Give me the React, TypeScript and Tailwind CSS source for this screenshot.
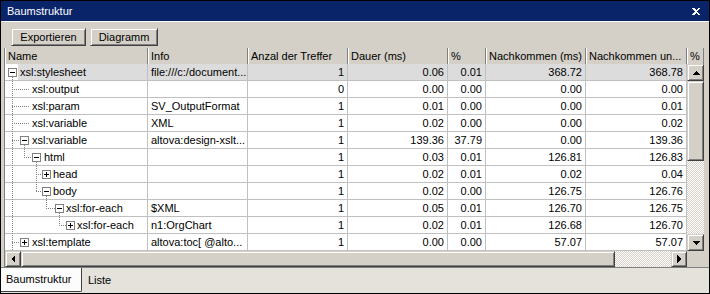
import React from 'react'

type Row = {
  name: string
  tx: number
  info: string
  hits: string
  dur: string
  pct: string
  nk: string
  nku: string
}

const rows: Row[] = [
  { name: 'xsl:stylesheet', tx: 15, info: 'file:///c:/document...', hits: '1', dur: '0.06', pct: '0.01', nk: '368.72', nku: '368.78' },
  { name: 'xsl:output', tx: 27, info: '', hits: '0', dur: '0.00', pct: '0.00', nk: '0.00', nku: '0.00' },
  { name: 'xsl:param', tx: 27, info: 'SV_OutputFormat', hits: '1', dur: '0.01', pct: '0.00', nk: '0.00', nku: '0.01' },
  { name: 'xsl:variable', tx: 27, info: 'XML', hits: '1', dur: '0.02', pct: '0.00', nk: '0.00', nku: '0.02' },
  { name: 'xsl:variable', tx: 27, info: 'altova:design-xslt...', hits: '1', dur: '139.36', pct: '37.79', nk: '0.00', nku: '139.36' },
  { name: 'html', tx: 39, info: '', hits: '1', dur: '0.03', pct: '0.01', nk: '126.81', nku: '126.83' },
  { name: 'head', tx: 48, info: '', hits: '1', dur: '0.02', pct: '0.01', nk: '0.02', nku: '0.04' },
  { name: 'body', tx: 48, info: '', hits: '1', dur: '0.02', pct: '0.00', nk: '126.75', nku: '126.76' },
  { name: 'xsl:for-each', tx: 61, info: '$XML', hits: '1', dur: '0.05', pct: '0.01', nk: '126.70', nku: '126.75' },
  { name: 'xsl:for-each', tx: 72, info: 'n1:OrgChart', hits: '1', dur: '0.02', pct: '0.01', nk: '126.68', nku: '126.70' },
  { name: 'xsl:template', tx: 27, info: 'altova:toc[ @alto...', hits: '1', dur: '0.00', pct: '0.00', nk: '57.07', nku: '57.07' },
]

const raised =
  'bg-[#d4d0c8] border border-t-[#d4d0c8] border-l-[#d4d0c8] border-r-[#404040] border-b-[#404040] shadow-[inset_1px_1px_#ffffff,inset_-1px_-1px_#808080]'

const dither =
  'bg-[repeating-conic-gradient(#d4d0c8_0%_25%,#ffffff_0%_50%)] bg-[length:2px_2px]'

function TreeLines() {
  const v = [
    [7, 13, 187],
    [19, 81, 93],
    [31, 98, 127],
    [41, 132, 144],
    [54, 149, 161],
  ]
  const h: [number, number, number][] = [
    [1, 7, 25],
    [2, 7, 25],
    [3, 7, 25],
    [4, 7, 15],
    [10, 7, 15],
    [5, 19, 27],
    [6, 31, 37],
    [7, 31, 37],
    [8, 41, 50],
    [9, 54, 61],
  ]
  const boxes: [number, number, string][] = [
    [0, 3, '-'],
    [4, 15, '-'],
    [5, 27, '-'],
    [6, 37, '+'],
    [7, 37, '-'],
    [8, 50, '-'],
    [9, 61, '+'],
    [10, 15, '+'],
  ]
  return (
    <svg className="absolute left-0 top-0 pointer-events-none" width="143" height="187" shapeRendering="crispEdges">
      {v.map(([x, y0, y1], i) => (
        <line key={'v' + i} x1={x + 0.5} y1={y0} x2={x + 0.5} y2={y1} stroke="#808080" strokeDasharray="1 1" />
      ))}
      {h.map(([r, x0, x1], i) => (
        <line key={'h' + i} x1={x0} y1={17 * r + 8.5} x2={x1} y2={17 * r + 8.5} stroke="#808080" strokeDasharray="1 1" />
      ))}
      {boxes.map(([r, x, s], i) => (
        <g key={'b' + i}>
          <rect x={x + 0.5} y={17 * r + 4.5} width="8" height="8" fill="#ffffff" stroke="#808080" />
          <line x1={x + 2} y1={17 * r + 8.5} x2={x + 7} y2={17 * r + 8.5} stroke="#000000" />
          {s === '+' && <line x1={x + 4.5} y1={17 * r + 6} x2={x + 4.5} y2={17 * r + 11} stroke="#000000" />}
        </g>
      ))}
    </svg>
  )
}

function Arrow({ dir }: { dir: 'up' | 'down' | 'left' | 'right' }) {
  const pts = {
    up: '4,1 0,5 8,5',
    down: '0,1 8,1 4,5',
    left: '5,0 5,8 1,4',
    right: '1,0 1,8 5,4',
  }[dir]
  const w = dir === 'up' || dir === 'down' ? 8 : 6
  const hgt = dir === 'up' || dir === 'down' ? 6 : 8
  return (
    <svg width={w} height={hgt} viewBox={`0 0 ${w} ${hgt}`} shapeRendering="crispEdges">
      <polygon points={pts} fill="#000000" />
    </svg>
  )
}

const cols = [
  { label: 'Name', w: 'w-[143px]' },
  { label: 'Info', w: 'w-[100px]' },
  { label: 'Anzal der Treffer', w: 'w-[100px]' },
  { label: 'Dauer (ms)', w: 'w-[100px]' },
  { label: '%', w: 'w-[38px]' },
  { label: 'Nachkommen (ms)', w: 'w-[100px]' },
  { label: 'Nachkommen un...', w: 'w-[101px]' },
  { label: '%', w: 'w-[17px]' },
]

export default function App() {
  return (
    <div className="w-[710px] h-[294px] border border-black bg-[#d4d0c8] flex flex-col overflow-hidden font-['Liberation_Sans',Arial,sans-serif] text-[11px] text-black">
      <div className="h-[20px] bg-[#0a246a] flex items-center justify-between pl-[6px] pr-[9px] text-white">
        <span>Baumstruktur</span>
        <svg width="8" height="7" viewBox="0 0 8 7" shapeRendering="crispEdges">
          <path d="M0 0h2l2 2 2-2h2v1L5 3.5 8 6v1H6L4 5 2 7H0V6l3-2.5L0 1z" fill="#ffffff" />
        </svg>
      </div>

      <div className="h-[27px] border-t border-white flex items-start gap-[4px] pt-[6px] pl-[10px]">
        <button className={`${raised} h-[18px] w-[75px] flex items-center justify-center`}>Exportieren</button>
        <button className={`${raised} h-[18px] w-[68px] flex items-center justify-center`}>Diagramm</button>
      </div>

      <div className="ml-[3px] w-[700px] border-l border-[#808080] flex flex-col bg-white">
        <div className="flex h-[16px] bg-[#d4d0c8]">
          {cols.map((c, i) => (
            <div
              key={i}
              className={`${c.w} shrink-0 h-full flex items-center px-[3px] border-r border-[#808080] shadow-[inset_1px_0_#ffffff] whitespace-nowrap overflow-hidden`}
            >
              {c.label}
            </div>
          ))}
        </div>

        <div className="flex h-[187px]">
          <div className="w-[682px] relative">
            {rows.map((r, i) => {
              const sel = i === 0
              const cell = `shrink-0 h-full flex items-center justify-end pr-[3px] border-r border-[#c0c0c0] ${sel ? 'bg-[#dcdcdc]' : ''}`
              return (
                <div key={i} className="flex h-[17px] border-b border-[#c0c0c0] whitespace-nowrap">
                  <div className="w-[143px] shrink-0 h-full flex border-r border-[#c0c0c0]">
                    {sel ? (
                      <div className="ml-[13px] pl-[2px] flex-1 flex items-center bg-[#dcdcdc]">{r.name}</div>
                    ) : (
                      <div className="flex items-center" style={{ paddingLeft: r.tx }}>
                        {r.name}
                      </div>
                    )}
                  </div>
                  <div className={`w-[100px] shrink-0 h-full flex items-center pl-[3px] border-r border-[#c0c0c0] overflow-hidden ${sel ? 'bg-[#dcdcdc]' : ''}`}>
                    {r.info}
                  </div>
                  <div className={`w-[100px] ${cell}`}>{r.hits}</div>
                  <div className={`w-[100px] ${cell}`}>{r.dur}</div>
                  <div className={`w-[38px] ${cell}`}>{r.pct}</div>
                  <div className={`w-[100px] ${cell}`}>{r.nk}</div>
                  <div className={`w-[101px] ${cell}`}>{r.nku}</div>
                </div>
              )
            })}
            <TreeLines />
          </div>

          <div className="w-[17px] flex flex-col">
            <div className={`${raised} h-[17px] flex items-center justify-center`}>
              <Arrow dir="up" />
            </div>
            <div className={`${raised} h-[80px]`} />
            <div className={`flex-1 ${dither}`} />
            <div className={`${raised} h-[17px] flex items-center justify-center`}>
              <Arrow dir="down" />
            </div>
          </div>
        </div>

        <div className="flex h-[16px]">
          <div className="w-[682px] flex">
            <div className={`${raised} w-[16px] flex items-center justify-center`}>
              <Arrow dir="left" />
            </div>
            <div className={`${raised} w-[594px]`} />
            <div className={`flex-1 ${dither}`} />
            <div className={`${raised} w-[16px] flex items-center justify-center`}>
              <Arrow dir="right" />
            </div>
          </div>
          <div className="w-[17px] bg-[#d4d0c8]" />
        </div>
      </div>

      <div className="flex-1 border-t border-[#808080] bg-[#e4e2db] flex items-start">
        <div className="h-[24px] w-[81px] bg-[#fcfcfc] border-r border-b border-[#404040] rounded-br-[2px] flex items-center pl-[5px]">
          Baumstruktur
        </div>
        <div className="h-[24px] flex items-center pl-[6px]">Liste</div>
      </div>
    </div>
  )
}
